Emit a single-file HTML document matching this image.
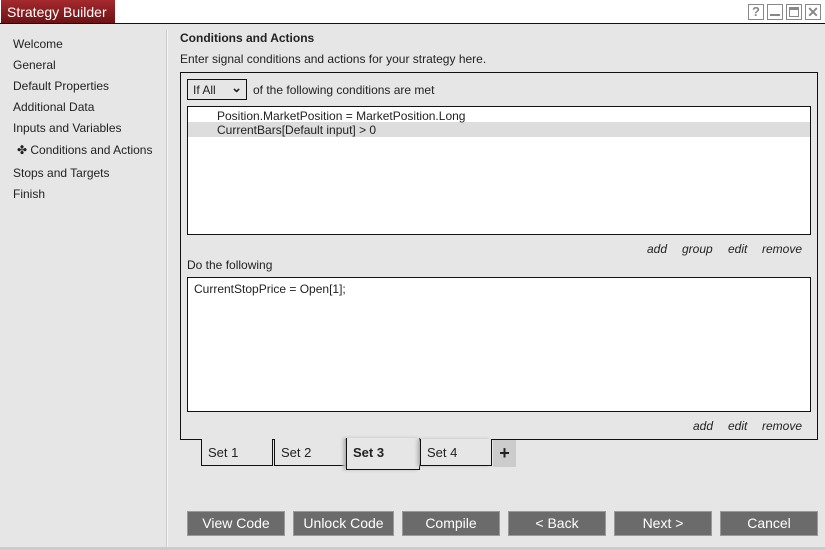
<!DOCTYPE html>
<html><head><style>
*{margin:0;padding:0;box-sizing:border-box}
body{width:825px;height:550px;background:#e6e6e6;font-family:"Liberation Sans",Arial,sans-serif;font-size:12px;color:#222;position:relative;overflow:hidden}
.a{position:absolute}
.tb{left:0;top:0;width:825px;height:24px;background:#fff;border-bottom:1px solid #111}
.title{left:1px;top:0;width:114px;height:23px;background:linear-gradient(#a52a2e,#6d1214);color:#fff;font-size:14px;padding:4px 0 0 6px}
.wb{top:4px;width:16px;height:16px;border:1px solid #888;background:#fff;color:#888;font-size:13px;text-align:center;line-height:14px;font-weight:bold}
.nav div{position:absolute;left:13px;font-size:12px}
.lnk{font-style:italic;font-size:12px}
.btn{top:511px;height:25px;background:#6b6b6b;border:1px solid #999;color:#fff;font-size:14px;text-align:center;line-height:23px}
.tab{top:439px;height:27px;border:1px solid #111;border-top:none;font-size:13px;padding:6px 0 0 6px;background:#e6e6e6}
</style></head><body>
<div class="a tb"></div>
<div class="a title">Strategy Builder</div>
<div class="a wb" style="left:748px">?</div>
<div class="a wb" style="left:767px"><div style="position:absolute;left:2px;right:2px;bottom:3px;height:2px;background:#888"></div></div>
<div class="a wb" style="left:786px"><div style="position:absolute;left:2px;right:2px;top:2px;bottom:2px;border:1px solid #888;border-top:3px solid #888"></div></div>
<div class="a wb" style="left:805px;font-size:14px">✕</div>
<div class="a" style="left:166px;top:30px;width:2px;height:520px;background:#f4f4f4;border-left:1px solid #ccc"></div>
<div class="nav">
<div style="top:37px">Welcome</div>
<div style="top:58px">General</div>
<div style="top:79px">Default Properties</div>
<div style="top:100px">Additional Data</div>
<div style="top:121px">Inputs and Variables</div>
<div style="top:143px;left:17px">✤ Conditions and Actions</div>
<div style="top:166px">Stops and Targets</div>
<div style="top:187px">Finish</div>
</div>
<div class="a" style="left:180px;top:31px;font-weight:bold">Conditions and Actions</div>
<div class="a" style="left:180px;top:52px">Enter signal conditions and actions for your strategy here.</div>
<div class="a" style="left:180px;top:72px;width:638px;height:368px;border:1px solid #111"></div>
<div class="a" style="left:187px;top:79px;width:60px;height:21px;border:1px solid #111;padding:3px 0 0 5px;font-size:12px">If All<span style="position:absolute;right:4px;top:0px;font-size:13px;font-weight:bold">⌄</span></div>
<div class="a" style="left:253px;top:83px">of the following conditions are met</div>
<div class="a" style="left:187px;top:106px;width:624px;height:129px;border:1px solid #111;background:#fff">
<div style="padding:2px 0 0 29px;height:15px">Position.MarketPosition = MarketPosition.Long</div>
<div style="padding:1px 0 0 29px;height:15px;background:#ddd">CurrentBars[Default input] &gt; 0</div>
</div>
<div class="a lnk" style="left:647px;top:242px">add</div>
<div class="a lnk" style="left:682px;top:242px">group</div>
<div class="a lnk" style="left:728px;top:242px">edit</div>
<div class="a lnk" style="left:762px;top:242px">remove</div>
<div class="a" style="left:187px;top:258px">Do the following</div>
<div class="a" style="left:187px;top:277px;width:624px;height:135px;border:1px solid #111;background:#fff;padding:4px 0 0 6px">CurrentStopPrice = Open[1];</div>
<div class="a lnk" style="left:693px;top:419px">add</div>
<div class="a lnk" style="left:728px;top:419px">edit</div>
<div class="a lnk" style="left:762px;top:419px">remove</div>
<div class="a tab" style="left:201px;width:72px">Set 1</div>
<div class="a tab" style="left:274px;width:72px">Set 2</div>
<div class="a tab" style="left:346px;top:438px;width:74px;height:32px;font-weight:bold;padding-top:7px;box-shadow:-3px 0 3px #bbb">Set 3</div>
<div class="a tab" style="left:420px;width:72px;box-shadow:-3px 0 3px #bbb">Set 4</div>
<div class="a" style="left:493px;top:440px;width:23px;height:27px;background:#ccc;text-align:center;font-size:18px;font-weight:bold;line-height:26px">+</div>
<div class="a btn" style="left:187px;width:98px">View Code</div>
<div class="a btn" style="left:293px;width:101px">Unlock Code</div>
<div class="a btn" style="left:402px;width:98px">Compile</div>
<div class="a btn" style="left:508px;width:98px">&lt; Back</div>
<div class="a btn" style="left:614px;width:98px">Next &gt;</div>
<div class="a btn" style="left:720px;width:98px">Cancel</div>
<div class="a" style="left:0;top:547px;width:825px;height:3px;background:#ccc"></div>
</body></html>
